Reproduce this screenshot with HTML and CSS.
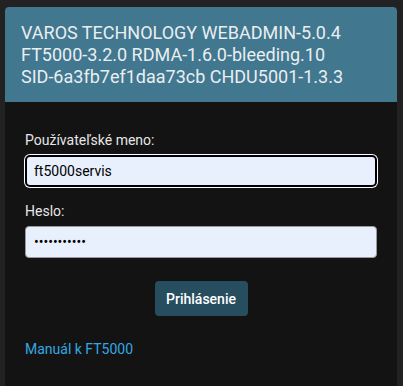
FILE: index.html
```html
<!DOCTYPE html>
<html lang="sk">
<head>
<meta charset="utf-8">
<title>WEBADMIN</title>
<link rel="stylesheet" href="styles.css">
</head>
<body>
<div class="card">
  <div class="card-header">
    VAROS TECHNOLOGY WEBADMIN-5.0.4<br>
    FT5000-3.2.0 RDMA-1.6.0-bleeding.10<br>
    SID-6a3fb7ef1daa73cb CHDU5001-1.3.3
  </div>
  <form class="card-body">
    <div class="field">
      <label class="label" for="user">Používateľské meno:</label>
      <input class="input input-focused" id="user" type="text" value="ft5000servis">
    </div>
    <div class="field">
      <label class="label" for="pass">Heslo:</label>
      <input class="input" id="pass" type="password" value="xxxxxxxxxxx">
    </div>
    <div class="actions">
      <button class="btn" type="button">Prihlásenie</button>
    </div>
    <a class="link" href="#">Manuál k FT5000</a>
  </form>
</div>
</body>
</html>
```

FILE: styles.css
```css
html, body {
  margin: 0;
  padding: 0;
  height: 100%;
}
body {
  background: #222222;
  font-family: Roboto, "Liberation Sans", sans-serif;
  overflow: hidden;
}
.card {
  margin: 7px 6px 0 5px;
  min-height: calc(100vh - 7px);
  background: #131313;
  border-radius: 4px 4px 0 0;
  display: flex;
  flex-direction: column;
}
.card-header {
  background: #41778f;
  color: #e9eef1;
  font-size: 18px;
  line-height: 22px;
  padding: 15px 16px 14px 16px;
  border-radius: 4px 4px 0 0;
}
.card-body {
  padding: 28px 20px 20px 20px;
  display: flex;
  flex-direction: column;
  margin: 0;
}
.field {
  display: flex;
  flex-direction: column;
  margin-bottom: 14px;
}
.label {
  color: #e6e6e6;
  font-size: 14px;
  line-height: 20px;
  margin-bottom: 5px;
}
.input {
  box-sizing: border-box;
  width: 100%;
  height: 32px;
  margin: 0;
  padding: 0 8px;
  border: 1px solid #9a9a9a;
  border-radius: 4px;
  background: #e8f0fe;
  color: #000;
  font-family: Roboto, "Liberation Sans", sans-serif;
  font-size: 14px;
  outline: none;
}
.input-focused {
  border: 2px solid #000;
  box-shadow: 0 0 0 1px #ffffff;
  padding: 0 7px;
  border-radius: 5px;
}
.actions {
  display: flex;
  justify-content: center;
  margin-top: 9px;
}
.btn {
  width: 93px;
  height: 35px;
  border: none;
  border-radius: 4px;
  background: #264e5f;
  color: #ffffff;
  font-family: Roboto, "Liberation Sans", sans-serif;
  font-size: 14px;
  font-weight: 500;
  padding: 0;
}
.link {
  margin-top: 23px;
  align-self: flex-start;
  color: #33a8e2;
  font-size: 14px;
  line-height: 20px;
  text-decoration: none;
}
```
